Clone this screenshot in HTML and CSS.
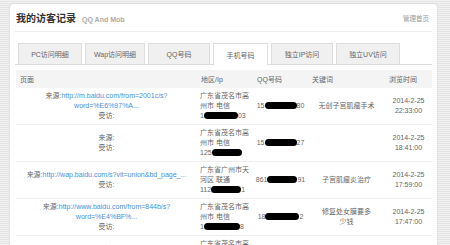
FILE: index.html
```html
<!DOCTYPE html>
<html lang="zh">
<head>
<meta charset="utf-8">
<title>我的访客记录</title>
<link rel="stylesheet" href="styles.css">
</head>
<body>
<div class="panel">
  <div class="head">
    <div class="title">我的访客记录<span class="sub">QQ And Mob</span></div>
    <a class="home">管理首页</a>
  </div>
  <div class="tabs">
    <div class="tab t1">PC访问明细</div>
    <div class="tab t2">Wap访问明细</div>
    <div class="tab t3">QQ号码</div>
    <div class="tab t4 active">手机号码</div>
    <div class="tab t5">独立IP访问</div>
    <div class="tab t6">独立UV访问</div>
  </div>
  <table class="grid">
    <colgroup>
      <col class="c-page"><col class="c-area"><col class="c-qq"><col class="c-kw"><col class="c-time">
    </colgroup>
    <thead>
      <tr><th>页面</th><th>地区/Ip</th><th>QQ号码</th><th>关键词</th><th>浏览时间</th></tr>
    </thead>
    <tbody>
      <tr>
        <td class="page">来源:<a>http://m.baidu.com/from=2001c/s?<br>word=%E6%97%A...</a><br>受访:</td>
        <td class="area">广东省茂名市高州市 电信<br>1<span class="blot w34"></span>03</td>
        <td class="qq">15<span class="blot w32"></span>80</td>
        <td class="kw">无创子宫肌瘤手术</td>
        <td class="time">2014-2-25<br>22:33:00</td>
      </tr>
      <tr>
        <td class="page">来源:<br>受访:</td>
        <td class="area">广东省茂名市高州市 电信<br>125<span class="blot w30"></span></td>
        <td class="qq">15<span class="blot w32"></span>27</td>
        <td class="kw"></td>
        <td class="time">2014-2-25<br>18:41:00</td>
      </tr>
      <tr>
        <td class="page">来源:<a>http://wap.baidu.com/s?vit=union&amp;bd_page_...</a><br>受访:</td>
        <td class="area">广东省广州市天河区 联通<br>112<span class="blot w30"></span>1</td>
        <td class="qq">861<span class="blot w30"></span>91</td>
        <td class="kw">子宫肌瘤炎治疗</td>
        <td class="time">2014-2-25<br>17:59:00</td>
      </tr>
      <tr>
        <td class="page">来源:<a>http://www.baidu.com/from=844b/s?<br>word=%E4%BF%...</a><br>受访:</td>
        <td class="area">广东省茂名市高州市 电信<br>1<span class="blot w36"></span>8</td>
        <td class="qq">18<span class="blot w34"></span>2</td>
        <td class="kw">修复处女膜要多<br>少钱</td>
        <td class="time">2014-2-25<br>17:47:00</td>
      </tr>
      <tr>
        <td class="page">来源:<br>受访:</td>
        <td class="area">广东省茂名市高州市 电信<br>1<span class="blot w34"></span>9</td>
        <td class="qq">13<span class="blot w32"></span>6</td>
        <td class="kw"></td>
        <td class="time">2014-2-25<br>17:30:00</td>
      </tr>
    </tbody>
  </table>
</div>
</body>
</html>
```

FILE: styles.css
```css
html, body {
  margin: 0;
  padding: 0;
}
body {
  width: 450px;
  height: 245px;
  overflow: hidden;
  background-color: #ececec;
  background-image: repeating-linear-gradient(0deg, #f1f1f1 0 1px, #e5e5e5 1px 2px);
  font-family: "Liberation Sans", "Noto Sans CJK SC", sans-serif;
  font-size: 7px;
  color: #666;
}
.panel {
  margin: 4px 0 0 10px;
  width: 427px;
  min-height: 260px;
  background: #fff;
  border-radius: 4px;
  box-shadow: 0 0 2px rgba(0, 0, 0, 0.12);
  padding: 0 5px 0 5px;
  box-sizing: border-box;
}
.head {
  display: flex;
  align-items: center;
  justify-content: space-between;
  height: 27px;
  border-bottom: 1px solid #ececec;
}
.title {
  font-size: 10px;
  font-weight: bold;
  color: #333;
  padding-left: 1px;
  display: flex;
  align-items: baseline;
}
.sub {
  font-size: 7px;
  font-weight: bold;
  color: #aaa;
  margin-left: 6px;
}
.home {
  font-size: 6.5px;
  color: #999;
  margin-right: 3px;
}
.tabs {
  display: flex;
  gap: 3px;
  margin-top: 11px;
  padding-left: 3px;
  border-bottom: 1px solid #ddd;
  height: 21px;
}
.tab {
  box-sizing: border-box;
  height: 21px;
  border: 1px solid #ddd;
  border-bottom: none;
  background: #f0f0f0;
  display: flex;
  align-items: center;
  justify-content: center;
  color: #666;
}
.tab.active {
  background: #fff;
  height: 22px;
}
.t1 { width: 64px; }
.t2 { width: 60px; }
.t3 { width: 62px; }
.t4 { width: 55px; }
.t5 { width: 62px; }
.t6 { width: 64px; }
.grid {
  margin-top: 5px;
  margin-left: 1px;
  width: 416px;
  border-collapse: collapse;
  table-layout: fixed;
}
.c-page { width: 181px; }
.c-area { width: 56px; }
.c-qq { width: 55px; }
.c-kw { width: 77px; }
.c-time { width: 47px; }
th {
  background: #f4f4f4;
  height: 18px;
  padding: 0 0 0 4px;
  text-align: left;
  font-weight: normal;
  color: #666;
}
td {
  padding: 3px 3px;
  line-height: 10px;
  border-bottom: 1px solid #eee;
  vertical-align: middle;
  text-align: center;
  color: #666;
  height: 30px;
}
td.area {
  text-align: left;
  padding-left: 3px;
  padding-right: 2px;
}
td.page,
td.qq {
  white-space: nowrap;
}
td.qq {
  padding-left: 0;
  padding-right: 0;
}
a {
  color: #4a90d9;
  text-decoration: none;
}
.blot {
  display: inline-block;
  height: 7px;
  background: #000;
  border-radius: 4px;
  vertical-align: -1px;
  filter: blur(0.5px);
}
.w30 { width: 30px; }
.w32 { width: 32px; }
.w34 { width: 34px; }
.w36 { width: 36px; }
```
